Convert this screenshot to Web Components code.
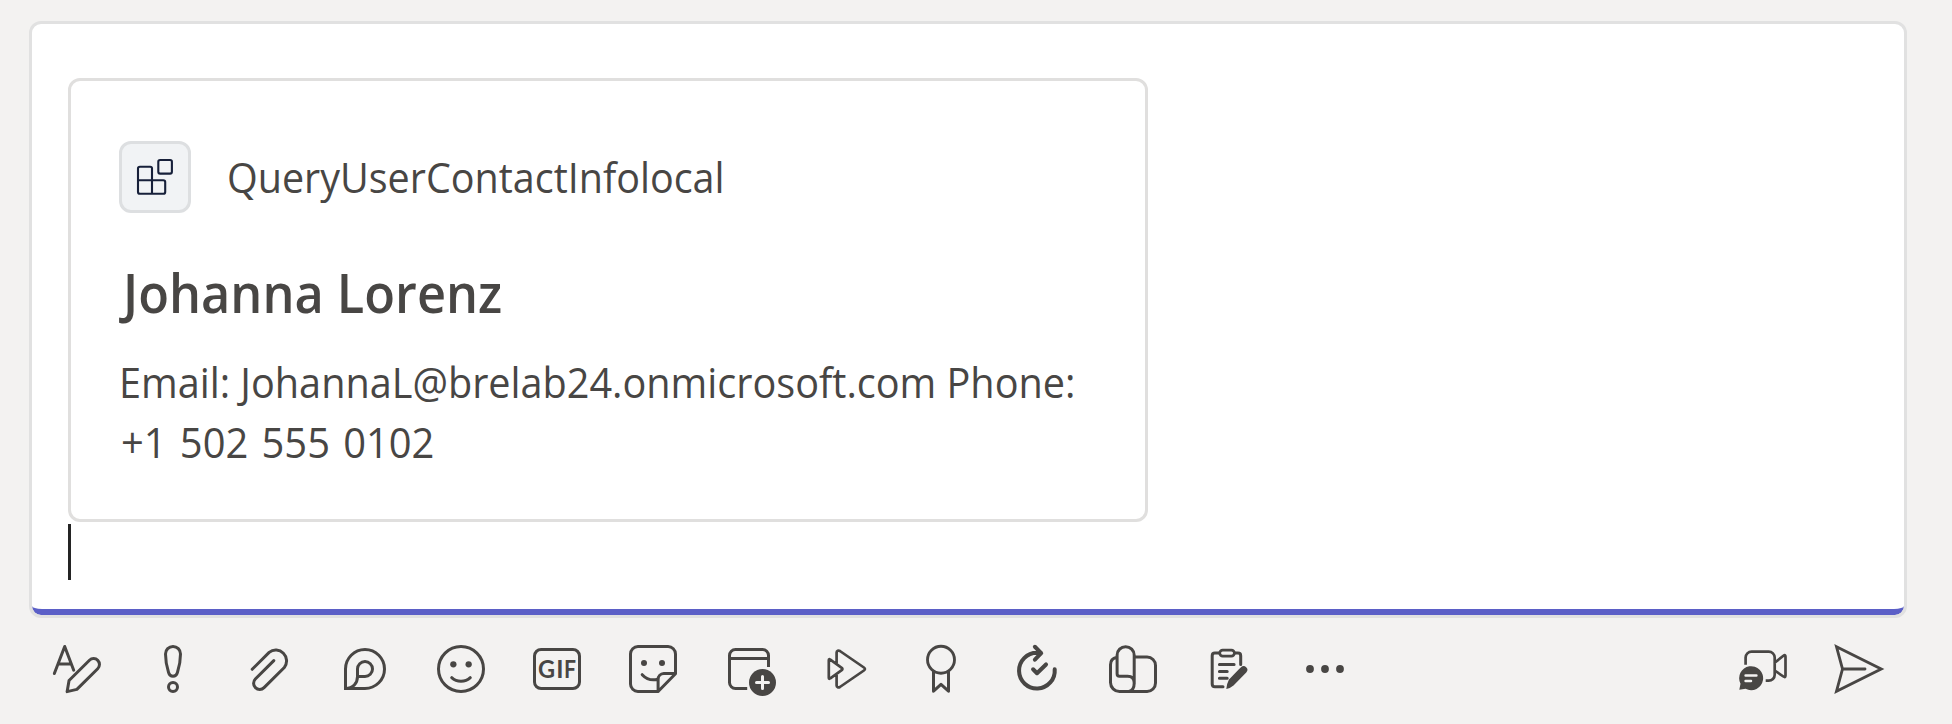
<!DOCTYPE html>
<html lang="en"><head><meta charset="utf-8"><title>Compose message</title>
<style>
html,body{margin:0;height:100%}
body{background:#f3f2f1;color:#484644;font-family:"Open Sans","Noto Sans",sans-serif;overflow:hidden}
</style></head><body>
<compose-area></compose-area>
<script>
const define=(name,html,init)=>customElements.define(name,class extends HTMLElement{
  constructor(){super();const t=document.createElement('template');t.innerHTML=html;
    this.attachShadow({mode:'open'}).append(t.content.cloneNode(true));}
  connectedCallback(){if(init)init(this);}
});
const dot=(x,y,r)=>`<circle cx="${x}" cy="${y}" r="${r}" fill="currentColor" stroke="none"/>`;
const icons={
format:'<path d="M2.45 11.5 5.9 2.5 8.9 10.4M4 8.35H8.1M7.35 13.85 14.15 7.1A1.95 1.95 0 0 1 16.9 9.9L9.95 16.8 6.7 17.55Z"/>',
important:'<path d="M10 2.5C8.6 2.5 7.5 3.6 7.5 5 7.5 7.2 8 9.5 8.5 11.1 8.75 12 9.3 12.4 10 12.4S11.25 12 11.5 11.1C12 9.5 12.5 7.2 12.5 5 12.5 3.6 11.4 2.5 10 2.5Z"/><circle cx="10" cy="16" r="1.5"/>',
attach:'<path d="M4.4 10.1 10.05 4.45A3.6 3.6 0 0 1 15.1 9.5L8.35 16.2A2 2 0 0 1 5.45 13.35L11.6 7.2"/>',
loop:'<path stroke-linejoin="miter" d="M3.5 16.5V10A6.5 6.5 0 1 1 10 16.5ZM3.5 16.5C6 16.5 7.5 14.7 7.5 12.5V10A2.5 2.5 0 1 1 10 12.5H7.5"/>',
emoji:'<circle cx="10" cy="10" r="7.5"/>'+dot(7.45,8.45,1.05)+dot(12.55,8.45,1.05)+'<path d="M6.9 12.9C8.6 14.5 11.4 14.5 13.1 12.9"/>',
gif:'<rect x="2.5" y="3.5" width="15" height="13" rx="2.2"/><g fill="currentColor" stroke="none" font-family="Lato,sans-serif" font-weight="700" font-size="8.2"><text x="3.7" y="12.95" textLength="5.7" lengthAdjust="spacingAndGlyphs">G</text><text x="9.75" y="12.95">I</text><text x="12.35" y="12.95" textLength="4" lengthAdjust="spacingAndGlyphs">F</text></g>',
sticker:'<path d="M11.7 17.5H5A2.5 2.5 0 0 1 2.5 15V5A2.5 2.5 0 0 1 5 2.5H15A2.5 2.5 0 0 1 17.5 5V11.6L11.7 17.5V13.5A2 2 0 0 1 13.6 11.5H17.4M6.4 11.9C7.7 13.3 9.3 13.9 11.3 13.5"/>'+dot(7,8,1)+dot(13,8,1),
schedule:'<path stroke-linecap="butt" d="M16.5 9.3V5.5A2 2 0 0 0 14.5 3.5H5.5A2 2 0 0 0 3.5 5.5V14.5A2 2 0 0 0 5.5 16.5H9.4M3.5 6.5H16.5"/>'+dot(14.5,14.5,4.5)+'<path stroke="#f3f2f1" d="M14.5 12.5V16.5M12.5 14.5H16.5"/>',
stream:'<path stroke-width=".9" d="M7.2 8V4.5C7.2 3.9 7.8 3.7 8.3 4L16.3 9.5Q17 10 16.3 10.5L8.3 16C7.8 16.3 7.2 16.1 7.2 15.5V12M4.6 7.1Q4.6 6.5 5.1 6.9L8.9 9.6Q9.4 10 8.9 10.4L5.1 13.1Q4.6 13.5 4.6 12.9Z"/>',
praise:'<circle cx="10" cy="6.9" r="4.5" stroke-width=".95"/><path stroke-width="1" d="M7.5 10.9V17.4L10 15.1 12.5 17.4V10.9"/>',
approvals:'<path stroke-width="1.35" d="M15.9 10.1A5.95 5.95 0 1 1 10 4.6H11.3M9.3 2.6 11.4 4.7 9.3 6.9M8.7 10.1 10 11.4 13 8.5"/>',
viva:'<path stroke-width="1" d="M10.4 15V5.4A2.85 2.85 0 0 0 4.7 5.4V11.6Q4.7 12.4 5.5 12.4H8.2C9.7 12.4 10.4 13.3 10.4 14.7 10.4 16.3 9.7 17.3 8.6 17.5M4.6 6.1C3.3 6.4 2.5 7.3 2.5 8.6V14.5A3 3 0 0 0 5.5 17.5H14.7A2.8 2.8 0 0 0 17.5 14.7V8.8A2.8 2.8 0 0 0 14.7 6H10.5"/>',
forms:'<path stroke-width="1" d="M6.6 4.7H5.3Q4.4 4.7 4.4 5.6V15Q4.4 15.9 5.3 15.9H8M11.9 4.7H13Q13.9 4.7 13.9 5.6V8.5M6.8 8.5H11.7M6.8 10.8H9.4M6.8 13.1H9.4"/><rect x="6.9" y="3.7" width="4.9" height="2" rx="1" stroke-width=".9"/><path fill="currentColor" stroke="none" d="M13.3 10.1 14 9.45A1.2 1.2 0 0 1 15.75 11.15L11.5 15.5Q10.6 16.3 9.1 16.7 9.2 15 10 13.5Z"/>',
more:dot(5,10,1.3)+dot(10,10,1.3)+dot(15,10,1.3),
video:'<path stroke-width=".9" stroke-linecap="butt" d="M4.2 8.6V6.2A2 2 0 0 1 6.2 4.2H11.9A2 2 0 0 1 13.9 6.2V11.9A2 2 0 0 1 11.9 13.9H10.9M13.9 7.9 16.8 5.6Q17.5 5.1 17.5 5.9V12.2Q17.5 13 16.8 12.5L13.9 10.5"/><path fill="currentColor" stroke="none" d="M2.1 16.9 2.5 14.9A4 4 0 1 1 4.2 16.6Z"/><path stroke="#f3f2f1" stroke-width=".85" d="M4.2 12.15H7.8M4.2 14H6"/>',
send:'<path stroke-width=".95" stroke-linejoin="miter" d="M2.5 2.6 17.4 10 2.5 17.4 4.5 10ZM4.5 10H12"/>'
};
define('tool-icon',`<style>:host{display:block;width:60px;height:60px}svg{display:block;width:60px;height:60px}</style><svg viewBox="0 0 20 20" fill="none" stroke="currentColor" stroke-width="1" stroke-linecap="round" stroke-linejoin="round"></svg>`,
 el=>{el.shadowRoot.querySelector('svg').innerHTML=icons[el.getAttribute('name')];});
define('app-badge',`<style>:host{display:block;box-sizing:border-box;width:72px;height:72px;border:3px solid #dddfe1;border-radius:12px;background:#f1f3f5;color:#17203a}svg{display:block}</style>
<svg width="66" height="66" fill="none" stroke="currentColor" stroke-width="2.1" stroke-linejoin="round"><path d="M18 22.7H28.2Q30 22.7 30 24.5V36.3H41.3Q43.2 36.3 43.2 38V48Q43.2 49.8 41.3 49.8H18Q16 49.8 16 48V24.5Q16 22.7 18 22.7ZM16 36.3H30V49.8"/><rect x="36.3" y="16" width="13.6" height="13.6" rx="1.8"/></svg>`);
define('contact-card',`<style>
:host{display:block;box-sizing:border-box;width:1080px;height:444px;border:3px solid #e0dfde;border-radius:12px;padding:60px 48px 0}
header{display:flex;align-items:center;gap:36px;font-size:42px;line-height:60px}
h2{margin:43px 0 0;font-size:54px;font-weight:600;line-height:72px}
p{margin:24px 0 0;font-size:42px;line-height:60px}
.t{white-space:nowrap;display:block;width:max-content;transform-origin:0 50%}
.app{transform:scaleX(.94)}
.title{transform:translateX(4px) scaleX(.935)}
.l1{transform:scaleX(.943)}
.l2{word-spacing:3px;transform:translateX(2px) scaleX(.95)}
</style><header><app-badge></app-badge><span class="t app"><slot name="app"></slot></span></header><h2><span class="t title"><slot name="title"></slot></span></h2><p><span class="t l1"><slot name="line1"></slot></span><span class="t l2"><slot name="line2"></slot></span></p>`);
define('message-editor',`<style>
:host{display:block;box-sizing:border-box;height:597px;border:3px solid #e1e1e1;border-radius:12px;background:linear-gradient(#5b5fc7,#5b5fc7) left bottom/100% 9px no-repeat padding-box,#e1e1e1}
.paper{box-sizing:border-box;height:585px;background:#fff;border-radius:9px 9px 10px 10px/9px 9px 3px 3px;padding:54px 36px 0}
.caret{width:3px;height:56px;margin-top:2px;background:#242424}
</style><div class="paper"><slot></slot><div class="caret"></div></div>`);
define('compose-toolbar',`<style>:host{display:flex;justify-content:space-between;padding:21px 0 0 18px}div{display:flex;gap:36px}</style>
<div>${['format','important','attach','loop','emoji','gif','sticker','schedule','stream','praise','approvals','viva','forms','more'].map(n=>`<tool-icon name="${n}"></tool-icon>`).join('')}</div>
<div><tool-icon name="video"></tool-icon><tool-icon name="send"></tool-icon></div>`);
define('compose-area',`<style>:host{display:block;padding:21px 45px 0 29px}message-editor{width:1878px}compose-toolbar{width:1842px}</style>
<message-editor><contact-card><span slot="app">QueryUserContactInfolocal</span><span slot="title">Johanna Lorenz</span><span slot="line1">Email: JohannaL@brelab24.onmicrosoft.com Phone:</span><span slot="line2">+1 502 555 0102</span></contact-card></message-editor>
<compose-toolbar></compose-toolbar>`);
</script></body></html>
